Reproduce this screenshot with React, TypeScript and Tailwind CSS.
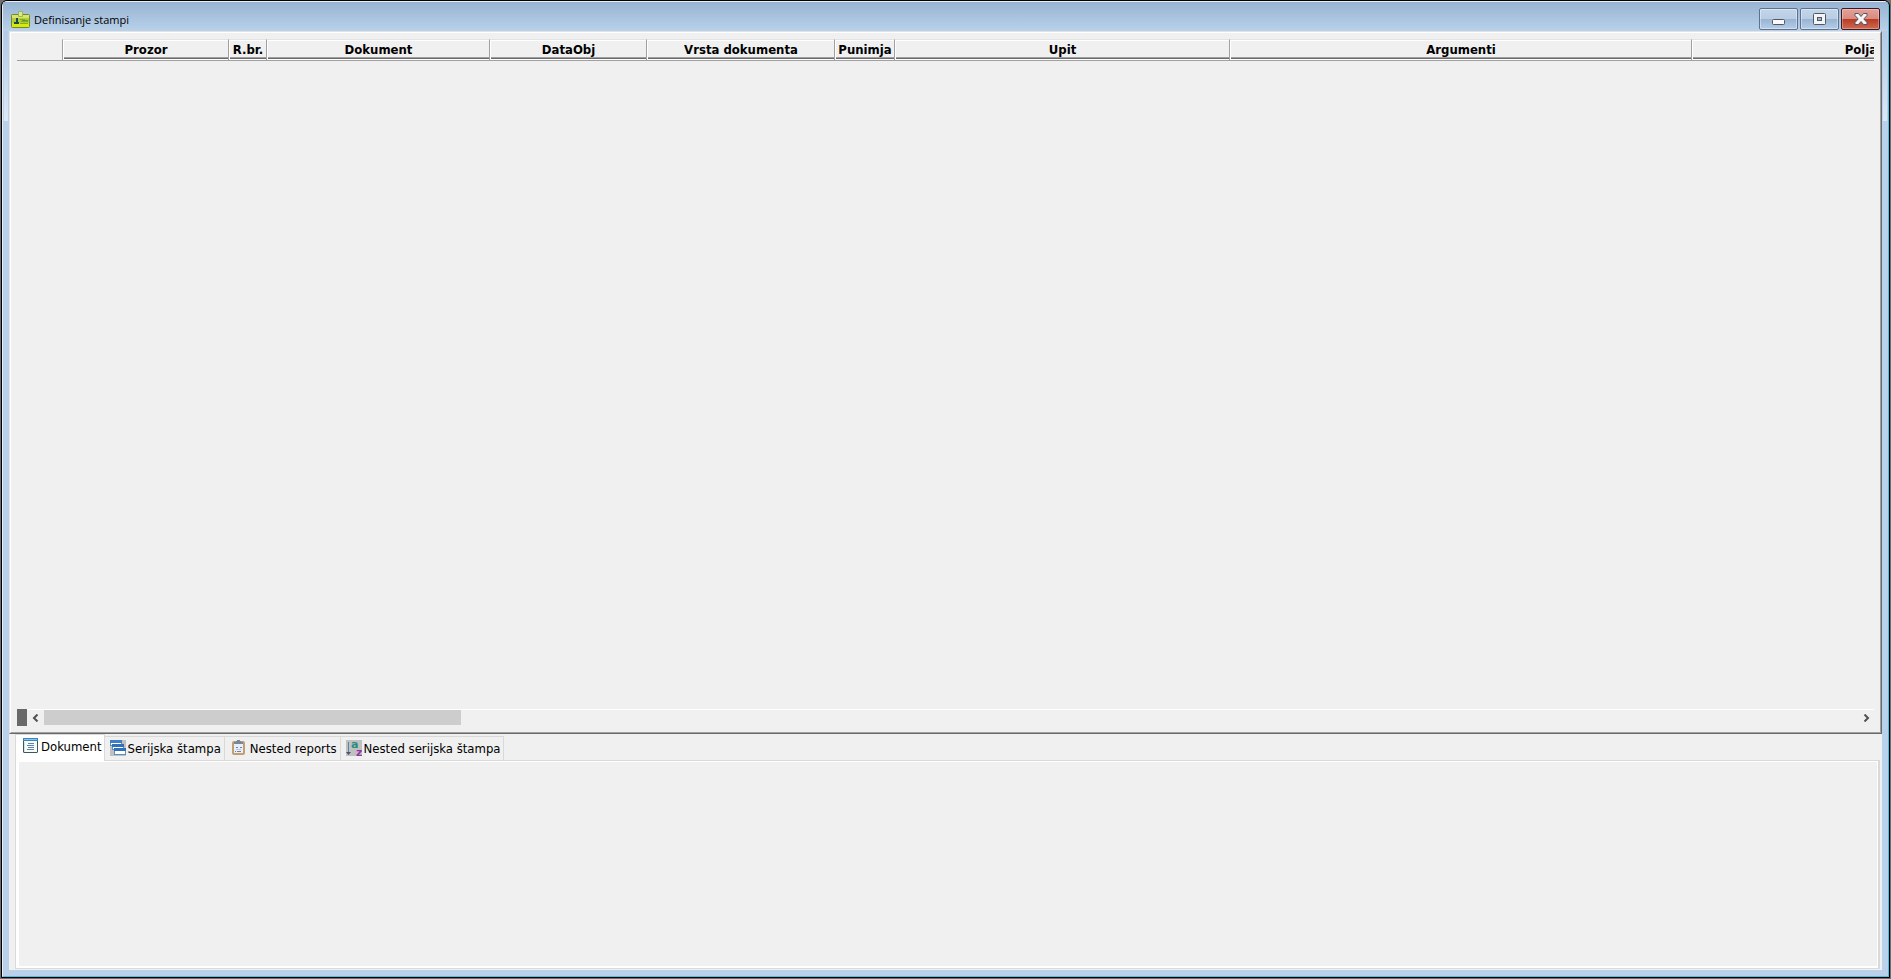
import type { ReactNode } from 'react';

const columns = [
  { label: 'Prozor', width: 'w-[166px]' },
  { label: 'R.br.', width: 'w-[38px]' },
  { label: 'Dokument', width: 'w-[223px]' },
  { label: 'DataObj', width: 'w-[157px]' },
  { label: 'Vrsta dokumenta', width: 'w-[188px]' },
  { label: 'Punimja', width: 'w-[60px]' },
  { label: 'Upit', width: 'w-[335px]' },
  { label: 'Argumenti', width: 'w-[462px]' },
  { label: 'Polja', width: 'w-[338px]' },
];

const AppIcon = () => (
  <svg width="20" height="18" viewBox="0 0 20 18">
    <rect x="0.5" y="3.5" width="18" height="13" rx="1" fill="#b5cc3a" stroke="#6c8c2c" />
    <rect x="1" y="4" width="17" height="3" fill="#d9e36a" />
    <rect x="1" y="12" width="17" height="4" fill="#dbe80a" />
    <path d="M7.5 0.5h4v5h-4z" fill="#dce88a" stroke="#9db458" />
    <path d="M5 7h2v4h1v2H3v-2h2z" fill="#174a4a" />
    <path d="M9 8.5h5M10 10.5h7M9 12.5h8" stroke="#7db41e" />
    <path d="M11 9.5h6" stroke="#62992a" />
  </svg>
);

const DokumentIcon = () => (
  <svg width="16" height="16" viewBox="0 0 16 16">
    <rect x="0.5" y="0.5" width="14" height="14" rx="0.5" fill="#f6fbf6" stroke="#3f5560" />
    <rect x="0" y="0" width="15" height="3" fill="#3f83bd" />
    <path d="M1 1.5h13" stroke="#8cc4ec" />
    <path d="M1.5 4v10" stroke="#cfe6ee" />
    <path d="M5 5.5h6M4 7.5h7M5 9.5h6M4 11.5h7" stroke="#5b83b0" />
  </svg>
);

const SerijskaIcon = () => (
  <svg width="16" height="16" viewBox="0 0 16 16">
    <rect width="16" height="16" fill="#c0c0c0" />
    <rect x="0.5" y="0.5" width="11" height="5" fill="#fff" stroke="#5a8fc4" />
    <rect x="0" y="0" width="12" height="3" fill="#3f7fc6" />
    <rect x="2.5" y="4.5" width="11" height="5" fill="#fff" stroke="#5a8fc4" />
    <rect x="2" y="4" width="12" height="3" fill="#2f70b8" />
    <rect x="4.5" y="8.5" width="11" height="6" fill="#fff" stroke="#5a8fc4" />
    <rect x="4" y="8" width="12" height="3" fill="#2f70b8" />
  </svg>
);

const ReportsIcon = () => (
  <svg width="18" height="16" viewBox="-2 0 18 16">
    <rect x="1" y="2" width="11" height="12" rx="1" fill="#e9eefa" stroke="#c0a070" strokeWidth="2" />
    <path d="M2 4V2h2V1h1V0h3v1h1v1h2v2z" fill="#76879c" />
    <path d="M4 7.5h2M8 7.5h2M3 11.5h1M5 11.5h4" stroke="#6d80a8" />
    <path d="M4 9.5h5" stroke="#b9c6dd" />
  </svg>
);

const SortIcon = () => (
  <svg width="16" height="16" viewBox="0 0 16 16" className="font-['DejaVu_Sans',sans-serif] font-bold">
    <rect width="16" height="16" fill="#c0c0c0" />
    <path d="M2.5 2v11" stroke="#4d86b4" />
    <path d="M0 12h5l-2.5 3z" fill="#4b5568" />
    <text x="5" y="8" fontSize="11" fill="#2a8c80">a</text>
    <text x="10" y="16" fontSize="11" fill="#8e3a9d">z</text>
  </svg>
);

type TabProps = { icon: ReactNode; label: string; active?: boolean };

const Tab = ({ icon, label, active }: TabProps) => (
  <button
    role="tab"
    aria-selected={!!active}
    className={
      active
        ? 'flex h-[27px] items-start gap-[2px] border-t border-r border-l border-[#d9d9d9] bg-white pt-[3px] pr-[2px] pl-[7px]'
        : 'mt-[2px] flex h-[25px] items-start gap-[2px] border-t border-r border-b border-[#d9d9d9] bg-[#f0f0f0] pt-[3px] pr-[3px] pl-[5px]'
    }
  >
    {icon}
    <span className="leading-[18px] whitespace-nowrap">{label}</span>
  </button>
);

// narrow frame edge beside the client area, with the glass shine on top
const FrameEdge = () => (
  <div className="flex w-[6px] shrink-0 flex-col items-center">
    <div className="h-[90px] w-[4px] bg-linear-to-b from-[#b2cae4] to-[#dce9f6]" />
  </div>
);

const captionButton =
  'flex h-[22px] w-[39px] items-center justify-center rounded-[2px] border border-[#5d7290] bg-[linear-gradient(#c4d5e8,#b9cde3_48%,#98b4d2_50%,#b4cde8)] shadow-[inset_0_0_0_1px_rgba(255,255,255,0.4)]';
const closeButton =
  'flex h-[22px] w-[39px] items-center justify-center rounded-[2px] border border-[#431422] bg-[linear-gradient(#e3a197,#d98b80_48%,#b83a22_50%,#cf6a50)] shadow-[inset_0_0_0_1px_rgba(255,255,255,0.3)]';

export default function App() {
  return (
    <div className="h-screen bg-[#6e6e6e] px-px pb-px font-['DejaVu_Sans_Condensed',Tahoma,sans-serif] text-[13px] text-black">
      <div className="flex h-full flex-col overflow-hidden rounded-t-md border border-black">
        <div className="flex min-h-0 grow flex-col rounded-t-[5px] border border-t-[#e6eef7] border-r-[#3fc4e4] border-b-[#3fc4e4] border-l-[#e6eef7] bg-[#b9d1ea]">
          <header className="flex h-[29px] shrink-0 items-start justify-between bg-linear-to-b from-[#98b4d2] to-[#b9d1ea] pt-[6px] pr-2 pl-2">
            <div className="flex items-center gap-[3px] pt-[2px]">
              <AppIcon />
              <h1 className="font-['Open_Sans',sans-serif] text-[11px] leading-5">Definisanje stampi</h1>
            </div>
            <div className="flex gap-[2px]">
              <button aria-label="Minimize" className={captionButton}>
                <svg width="14" height="14" viewBox="0 0 14 14">
                  <rect x="0.5" y="7.5" width="12" height="5" rx="1" fill="#fafafa" stroke="#535666" />
                </svg>
              </button>
              <button aria-label="Maximize" className={captionButton}>
                <svg width="14" height="14" viewBox="0 0 14 14">
                  <rect x="0.5" y="1.5" width="12" height="11" rx="1" fill="#f4f4f4" stroke="#535666" />
                  <rect x="4.5" y="5.5" width="4" height="3" fill="#9db8d6" stroke="#535666" />
                </svg>
              </button>
              <button aria-label="Close" className={closeButton}>
                <svg width="14" height="14" viewBox="0 0 14 14">
                  <path
                    d="M1 1.5h3.500L7 4.500l2.500-3H13v2L9.800 7l3.200 3.500v2H9.500L7 9.500l-2.500 3H1v-2L4.200 7 1 3.500z"
                    fill="#f6f6f6"
                    stroke="#535666"
                    strokeLinejoin="round"
                  />
                </svg>
              </button>
            </div>
          </header>

          <div className="flex min-h-0 grow pb-[6px]">
            <FrameEdge />
            <main className="flex min-w-0 grow flex-col bg-[#f0f0f0]">
              {/* Data window */}
              <section className="flex grow flex-col border border-t-[#e3e3e3] border-r-[#696969] border-b-[#696969] border-l-[#e3e3e3]">
                <div className="flex grow flex-col border border-t-white border-r-[#a0a0a0] border-b-[#a0a0a0] border-l-white p-[6px]">
                  <div className="overflow-hidden border-b border-[#a0a0a0]">
                    <table className="ml-[45px] w-[1967px] table-fixed border-separate border-spacing-0">
                      <thead>
                        <tr>
                          {columns.map((col) => (
                            <th
                              key={col.label}
                              className={`${col.width} h-[21px] border-t border-l border-t-[#e3e3e3] border-l-[#a0a0a0] p-0 align-top font-bold`}
                            >
                              <div className="border-t border-l border-white">
                                <div className="h-[17px] border-b border-[#a0a0a0] pt-px leading-4 whitespace-nowrap">
                                  {col.label}
                                </div>
                                <div className="h-px bg-[#696969]" />
                                <div className="h-px bg-white" />
                              </div>
                            </th>
                          ))}
                        </tr>
                      </thead>
                    </table>
                  </div>

                  <div className="mt-auto flex h-[17px]">
                    <div className="w-[10px] shrink-0 bg-[#696969]" />
                    <div className="flex min-w-0 grow border-t border-white">
                      <button aria-label="Scroll left" className="flex w-[17px] items-center justify-center">
                        <svg width="8" height="8" viewBox="0 0 8 8">
                          <path d="M5.500 0.500L2 4l3.500 3.500" fill="none" stroke="#505050" strokeWidth="2" />
                        </svg>
                      </button>
                      <div className="grow">
                        <div className="h-[15px] w-[23%] bg-[#cdcdcd]" />
                      </div>
                      <button aria-label="Scroll right" className="flex w-[17px] items-center justify-center">
                        <svg width="8" height="8" viewBox="0 0 8 8">
                          <path d="M2.500 0.500L6 4L2.500 7.500" fill="none" stroke="#505050" strokeWidth="2" />
                        </svg>
                      </button>
                    </div>
                  </div>
                </div>
              </section>

              {/* Tabs */}
              <div role="tablist" className="flex items-start pl-[6px]">
                <Tab active icon={<DokumentIcon />} label="Dokument" />
                <Tab icon={<SerijskaIcon />} label="Serijska štampa" />
                <Tab icon={<ReportsIcon />} label="Nested reports" />
                <Tab icon={<SortIcon />} label="Nested serijska štampa" />
                <div className="mr-[2px] h-[27px] grow border-b border-[#d9d9d9]" />
              </div>
              <div
                role="tabpanel"
                className="mr-[2px] mb-px ml-[6px] border-r-2 border-b border-l border-[#d9d9d9]"
              >
                <div className="h-[207px] border-t border-r border-b-2 border-l-3 border-white" />
              </div>
            </main>
            <FrameEdge />
          </div>
        </div>
      </div>
    </div>
  );
}
